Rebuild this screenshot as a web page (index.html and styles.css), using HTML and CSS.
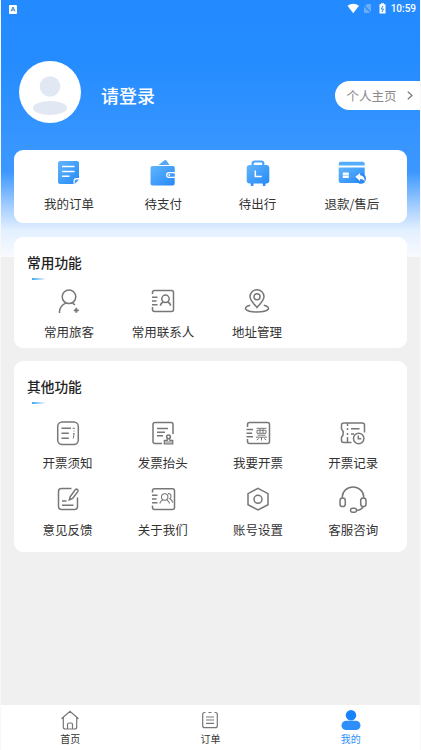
FILE: index.html
```html
<!DOCTYPE html>
<html lang="zh-CN">
<head>
<meta charset="utf-8">
<title>我的</title>
<link rel="stylesheet" href="styles.css">
</head>
<body>
<svg class="defs" width="0" height="0"><defs>
<linearGradient id="blue" x1="0" y1="0" x2="1" y2="1"><stop offset="0" stop-color="#62b5fb"/><stop offset="1" stop-color="#2589f8"/></linearGradient>
</defs></svg>
<div class="screen">
  <div class="status">
    <svg class="ime" viewBox="0 0 8 9"><rect width="8" height="9" rx="1" fill="#fff"/><path d="M2 6.3 4 2l2 4.300M2.800 5h2.400" fill="none" stroke="#3c7fcb" stroke-width="1"/></svg>
    <svg class="sys" viewBox="0 0 40 12">
      <path d="M.5 2.800Q6.200-1.200 12 2.800L6.200 10.200Z" fill="#fff"/>
      <path d="M20 1h4v9h-7V4Z" fill="#6aadf6"/><path d="m16 1.500 8.500 9" stroke="#248cff" stroke-width="1.200"/>
      <path d="M32.500 1.300H34V.2h3v1.100h1.500v9.200h-6Z" fill="#fff"/><path d="M36 2.800 34.300 6h2.200L35 9" fill="none" stroke="#2b83df" stroke-width="1"/>
    </svg>
    <span class="time">10:59</span>
  </div>
  <header class="profile">
    <svg class="avatar" viewBox="0 0 62 62"><circle cx="31" cy="31" r="31" fill="#fff"/><circle cx="31" cy="25.500" r="10.300" fill="#e1e8f4"/><ellipse cx="31" cy="47" rx="17" ry="7" fill="#e1e8f4"/></svg>
    <h1 class="login">请登录</h1>
    <div class="home-link"><span>个人主页</span><svg class="chevron" viewBox="0 0 6 9"><path d="m.8.8 4.200 3.700L.8 8.200" fill="none" stroke="#777" stroke-width="1.200"/></svg></div>
  </header>

  <section class="card orders">
    <div class="item"><svg class="icon" viewBox="0 0 28 28"><path d="M5 2h17q2 0 2 2v15h-2.500q-3 0-3 3v3H5q-2 0-2-2V4q0-2 2-2Z" fill="url(#blue)"/><path d="M19.700 25v-2.500q0-2 2-2H24Z" fill="#3994f9"/><path d="M7 7.500h12.500M7 12.500h12.500M7 17.300h7.500" stroke="#fff" stroke-width="1.500"/></svg><span>我的订单</span></div>
    <div class="item"><svg class="icon" viewBox="0 0 28 28"><path d="m9.500 6 6-4.700q1.300-.8 2.300.7L20.500 6Z" fill="#56a9f5"/><path d="M3.500 7H24q1.700 0 1.700 1.700v4.300H20a3 3 0 0 0 0 6h5.700v5.500q0 2-2 2H3.500q-2 0-2-2V9q0-2 2-2Z" fill="url(#blue)"/><path d="M20 14.300h5.700v3.400H20a1.700 1.700 0 0 1 0-3.400Z" fill="#3d98f8"/><circle cx="20.300" cy="16" r=".9" fill="#fff"/></svg><span>待支付</span></div>
    <div class="item"><svg class="icon" viewBox="0 0 28 28"><path d="M8.700 7V4.500q0-2 2-2h6.600q2 0 2 2V7" fill="none" stroke="#4da5fb" stroke-width="2.200"/><path d="M6.500 23h3.300l-.5 4H7Zm12 0h3.300l-.5 4H19Z" fill="#398ff8"/><rect x="2.700" y="6" width="22.600" height="18.500" rx="3" fill="url(#blue)"/><path d="M11.300 11.500v6h6.400" fill="none" stroke="#fff" stroke-width="1.500"/></svg><span>待出行</span></div>
    <div class="item"><svg class="icon" viewBox="0 0 28 28"><path d="M2.700 2.700h22q2 0 2 2v1.800h-26V4.700q0-2 2-2Z" fill="#55acfb"/><path d="M.7 8.500h26v13q0 2.500-2 2.500h-22q-2 0-2-2Z" fill="url(#blue)"/><circle cx="22.800" cy="19.500" r="5.200" fill="#2b88ef"/><path d="M4.800 13.500h6v5.500h-6Z" fill="#fff"/><path d="M5 16.300h5.700" stroke="#87c3fc" stroke-width=".8"/><path d="m17.300 17.800 4.800-3.800v2.300q4.500.3 4.700 6.200-1.500-2.500-4.700-2.400v2.100Z" fill="#fff"/></svg><span>退款/售后</span></div>
  </section>

  <section class="card common">
    <h2 class="title">常用功能</h2>
    <div class="grid">
      <div class="item"><svg class="icon line" viewBox="0 0 28 28"><circle cx="14" cy="9.800" r="6.800"/><path d="M4.500 26v-1.500q.5-5.500 6-8.300m7 0 2.500 1.600"/><path d="M21.300 20.800v5M18.800 23.300h5" stroke-width="1.800"/></svg><span>常用旅客</span></div>
      <div class="item"><svg class="icon line" viewBox="0 0 28 28"><path d="M3.500 7V5.500q0-2 2-2h17q2 0 2 2v17q0 2-2 2h-17q-2 0-2-2V20M3 10.200h5.500M3 14h4.500M3 17.700h5.500"/><circle cx="16.500" cy="11.800" r="3.700"/><path d="M11.500 18.800q0-2.600 3-3.800m4 0q3 1.200 3 3.800"/></svg><span>常用联系人</span></div>
      <div class="item"><svg class="icon line" viewBox="0 0 28 28"><path d="M14 20.500C10.500 16.500 7 13 7 9.700a7 7 0 0 1 14 0c0 3.300-3.500 6.800-7 10.800Z"/><circle cx="14" cy="9.800" r="3"/><path d="M7.200 18.300C-.5 20 1 25 14 25s14.500-5 6.800-6.700"/></svg><span>地址管理</span></div>
    </div>
  </section>

  <section class="card other">
    <h2 class="title">其他功能</h2>
    <div class="grid">
      <div class="item"><svg class="icon line" viewBox="0 0 28 28"><rect x="3.700" y="3" width="20.600" height="22.500" rx="4.500"/><path d="M7.500 9.300H17M7.500 14.300h7.300M7.500 19.300h7.300"/><path d="M18.500 9.300h2.500M20 11.500v1M19 14.500h1.200l-1 5" stroke-width="1"/></svg><span>开票须知</span></div>
      <div class="item"><svg class="icon line" viewBox="0 0 28 28"><path d="M13 24.500H6q-2 0-2-2v-17q0-2 2-2h16q2 0 2 2V15M8 9.500h11M8 13.200h8M8 16.800h6"/><circle cx="19.500" cy="17.800" r="1.900"/><path d="M18.300 19.700v1.600h-3v3.500h8.500v-3.500h-3v-1.600M15.500 23h8.500" stroke-width="1.200"/></svg><span>发票抬头</span></div>
      <div class="item"><svg class="icon line" viewBox="0 0 28 28"><path d="M3.500 8V5.500q0-2 2-2h18q2 0 2 2v17q0 2-2 2h-18q-2 0-2-2V20M2.500 10.500H9M2.500 14.200H8M2.500 17.700H9"/><path d="M12.500 9.300h10M13 11.300h9v3h-9ZM16 9.500v4.500M19 9.500v4.500M13.500 16.200h8M12 18.200h11M17.500 18v3.500M14.800 19.500l-2 1.500M20.200 19.500l2 1.500" stroke-width="1"/></svg><span>我要开票</span></div>
      <div class="item"><svg class="icon line" viewBox="0 0 28 28"><path d="M12.500 23.500H5q-2.500 0-2.500-2V18q2-1.500 1.700-4 0-2.500-1.700-4V6q0-2 2.500-2h18q2.500 0 2.500 2v7.500M8.500 4v3M8.500 9v2M8.500 14v2M8.500 18v5M12 9.800h8.500M12 15h3"/><circle cx="19.700" cy="19.500" r="5.200"/><path d="M19.300 16.500v3.300h3"/></svg><span>开票记录</span></div>
      <div class="item"><svg class="icon line" viewBox="0 0 28 28"><path d="M17.500 3.500h-10q-3 0-3 3v15q0 3 3 3h13q3 0 3-3v-9M8 16h4.500M8 20.300h11.500M15.300 15l.8-3.300 5.300-7.200q1.200-.8 2.100.1.900.7.300 2l-5.200 6.800Z"/></svg><span>意见反馈</span></div>
      <div class="item"><svg class="icon line" viewBox="0 0 28 28"><path d="M3.500 7.500v-2q0-1.700 2-1.700h18q2 0 2 2v16.700q0 2-2 2h-18q-2 0-2-2v-2M3 10.200h5.500M3 14h4.500M3 17.700h5.500"/><g stroke-width="1.100"><circle cx="15.700" cy="12" r="3.200"/><path d="M10.800 18.500q.3-2.300 3-3.500m4 0q2.400 1.200 2.700 3.500M19 8.700q3-.4 3 2.800 0 1.500-1.200 2.300 2.200 1 3 3.700"/></g></svg><span>关于我们</span></div>
      <div class="item"><svg class="icon line" viewBox="0 0 28 28"><path d="m14 3.300 10 5.400v11L14 25 4 19.700v-11Z"/><circle cx="14" cy="14.300" r="4"/></svg><span>账号设置</span></div>
      <div class="item"><svg class="icon line" viewBox="0 0 28 28"><path d="M3.300 13V11.800a10.700 9.800 0 0 1 21.400 0V13M24 22q-2 3.300-6.500 3.500"/><rect x="1" y="13" width="5.300" height="8.500" rx="2.600"/><rect x="21.700" y="13" width="5.300" height="8.500" rx="2.600"/><rect x="11.500" y="23.300" width="6" height="4" rx="2"/></svg><span>客服咨询</span></div>
    </div>
  </section>

  <nav class="tabs">
    <div class="tab"><svg class="tab-icon line" viewBox="0 0 20 20"><path d="M1.500 8.800 10 1.200l8.500 7.600M3.300 7.500V17q0 2 2 2h9.400q2 0 2-2V7.500M7.500 19v-4.500q0-1.500 1.500-1.500h2q1.500 0 1.500 1.500V19"/></svg><span>首页</span></div>
    <div class="tab"><svg class="tab-icon line" viewBox="0 0 20 20"><path d="M5.500 2.500H4.700q-2 0-2 2v11.200q0 2 2 2h10.600q2 0 2-2V4.500q0-2-2-2h-.8M8.500 2.500h3M6 7h8M6 10h8M6 13.300h8"/></svg><span>订单</span></div>
    <div class="tab active"><svg class="tab-icon" viewBox="0 0 20 20"><circle cx="10" cy="5.200" r="5.200" fill="#1782f9"/><rect x=".5" y="10.800" width="19" height="9.200" rx="4.600" fill="#2e8ffb"/></svg><span>我的</span></div>
  </nav>
</div>
</body>
</html>
```
FILE: styles.css
```css
* { box-sizing: border-box; }
body {
  margin: 0;
  background: #f0f0f0;
  font-family: "Noto Sans CJK SC", sans-serif;
  color: #333;
}
.defs { position: absolute; }
.screen {
  height: 750px;
  display: flex;
  flex-direction: column;
  overflow: hidden;
  background: linear-gradient(#238bff 0, #248cff 60px, #3996ff 150px, #3c98ff 172px, #a9d0ff 208px, #e2efff 230px, #f9fbff 257px) no-repeat 0 0 / 100% 257px, #f0f0f0;
  border-left: 1px solid rgba(255, 255, 255, .5);
  border-right: 1px solid rgba(255, 255, 255, .5);
}
.status {
  height: 18px;
  flex: none;
  display: flex;
  align-items: center;
  padding: 0 4px 0 8px;
}
.ime { width: 8px; height: 9px; }
.sys { width: 40px; height: 12px; margin-left: auto; }
.time {
  margin-left: 4px;
  font: 500 10px/18px Roboto, sans-serif;
  color: #fff;
}
.profile {
  height: 131.5px;
  flex: none;
  display: flex;
  align-items: flex-start;
  padding: 43px 0 0 18px;
}
.avatar { width: 62px; height: 62px; }
.login {
  margin: 21px 0 0 20px;
  font-size: 18px;
  line-height: 26px;
  font-weight: 500;
  color: #fff;
}
.home-link {
  margin: 20px -1px 0 auto;
  width: 86px;
  height: 29px;
  border-radius: 15px 0 0 15px;
  background: #fff;
  display: flex;
  align-items: center;
  padding-left: 11.500px;
  font-size: 12.500px;
  color: #8a8a8a;
}
.chevron { width: 6px; height: 9px; margin-left: 10px; }
.card {
  flex: none;
  margin: 0 13px 14px;
  border-radius: 9px;
  background: #fff;
}
.orders {
  height: 73.500px;
  padding: 9.500px 8px 0;
  display: grid;
  grid-template-columns: repeat(4, 1fr);
}
.common { height: 110.500px; }
.other { height: 190.500px; margin-top: -.5px; }
.title {
  margin: 0;
  padding: 15px 0 0 13px;
  font-size: 13.700px;
  line-height: 20px;
  font-weight: 500;
  color: #222;
}
.other .title { padding-top: 14.500px; }
.title::after {
  content: "";
  display: block;
  width: 14px;
  height: 2px;
  margin: 6px 0 0 5px;
  background: linear-gradient(90deg, #3fa9ef, #fff);
}
.grid {
  display: grid;
  grid-template-columns: repeat(4, 1fr);
  row-gap: 13px;
}
.common .grid { padding: 7px 9px 0 8px; }
.other .grid { padding: 15px 6px 0; }
.item {
  display: flex;
  flex-direction: column;
  align-items: center;
  gap: 8px;
  font-size: 12.500px;
  line-height: 18px;
  white-space: nowrap;
}
.other .item { gap: 7.500px; }
.icon { width: 28px; height: 28px; display: block; }
.line { fill: none; stroke: #777; stroke-width: 1.500; }
.tabs {
  margin: auto -1px 0;
  height: 45px;
  flex: none;
  display: grid;
  grid-template-columns: repeat(3, 1fr);
  background: #fff;
}
.tab {
  display: flex;
  flex-direction: column;
  align-items: center;
  padding-top: 5px;
  gap: 2px;
  font-size: 10px;
  line-height: 14px;
}
.tab-icon { width: 20px; height: 20px; }
.tab-icon.line { stroke-width: 1.200; }
.active { color: #2e8ffb; }
```
